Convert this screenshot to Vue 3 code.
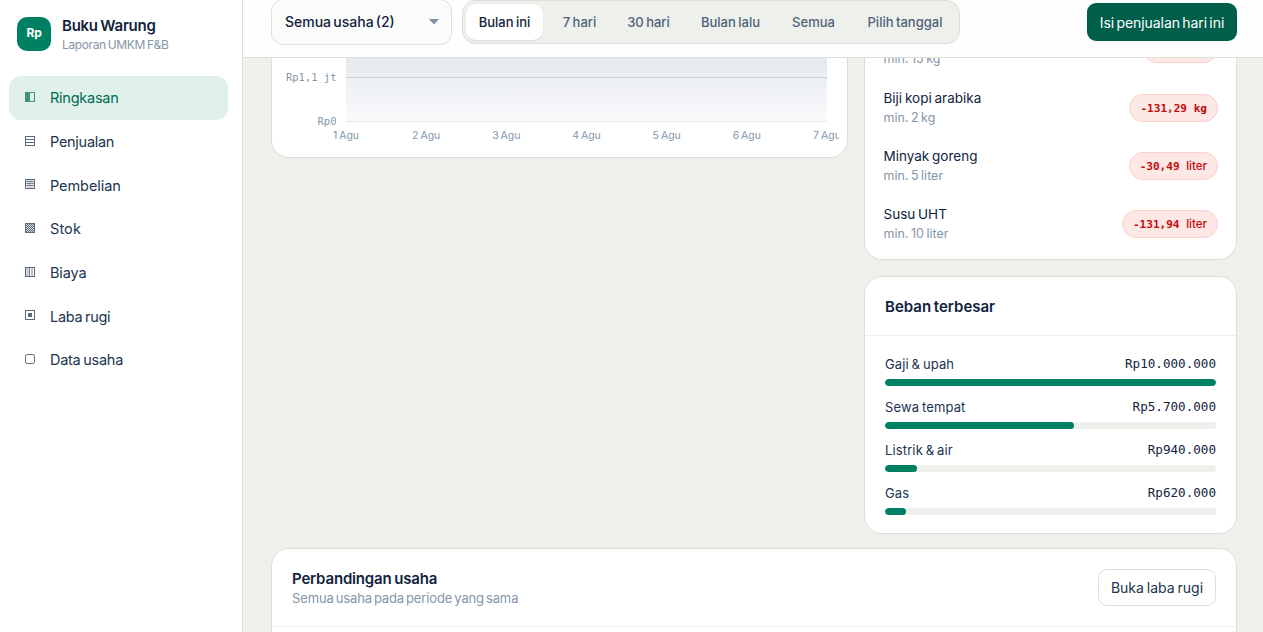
<script setup>
const nav = [
  { label: 'Ringkasan', icon: 'half', ls: -0.25 },
  { label: 'Penjualan', icon: 'rows', ls: -0.28 },
  { label: 'Pembelian', icon: 'grid', ls: -0.08 },
  { label: 'Stok', icon: 'check', ls: 0.1 },
  { label: 'Biaya', icon: 'cols', ls: -0.15 },
  { label: 'Laba rugi', icon: 'dot', ls: -0.3 },
  { label: 'Data usaha', icon: 'round', ls: -0.27 },
]
const dots = []
for (let r = 0; r < 8; r++) {
  for (let c = 0; c < 8; c++) {
    if ((r + c) % 2 === 0) dots.push({ x: 1 + c, y: 1 + r })
  }
}
const periods = [
  { label: 'Bulan ini', w: 77 },
  { label: '7 hari', w: 67 },
  { label: '30 hari', w: 71 },
  { label: 'Bulan lalu', w: 93 },
  { label: 'Semua', w: 73 },
  { label: 'Pilih tanggal', w: 110 },
]
const days = [1, 2, 3, 4, 5, 6, 7]
const stock = [
  { name: 'Gula pasir', min: 'min. 15 kg', qty: '-8,25', unit: 'kg' },
  { name: 'Biji kopi arabika', min: 'min. 2 kg', qty: '-131,29', unit: 'kg' },
  { name: 'Minyak goreng', min: 'min. 5 liter', qty: '-30,49', unit: 'liter' },
  { name: 'Susu UHT', min: 'min. 10 liter', qty: '-131,94', unit: 'liter' },
]
const costs = [
  { name: 'Gaji & upah', value: 'Rp10.000.000', pct: 100 },
  { name: 'Sewa tempat', value: 'Rp5.700.000', pct: 57 },
  { name: 'Listrik & air', value: 'Rp940.000', pct: 9.6 },
  { name: 'Gas', value: 'Rp620.000', pct: 6.3 },
]
</script>

<template>
  <div class="app">
    <aside class="sidebar">
      <div class="brand">
        <div class="logo">Rp</div>
        <div>
          <div class="brand-name">Buku Warung</div>
          <div class="brand-sub">Laporan UMKM F&amp;B</div>
        </div>
      </div>
      <nav>
        <a v-for="(n, i) in nav" :key="n.label" class="nav-item" :class="{ active: i === 0 }">
          <svg class="nav-icon" width="10" height="10" viewBox="0 0 10 10" fill="none" stroke="currentColor">
            <rect v-if="n.icon !== 'check'" x=".5" y=".5" width="9" height="9" :rx="n.icon === 'round' ? 1.8 : 0" />
            <rect v-if="n.icon === 'half'" x="0" y="0" width="5" height="10" fill="currentColor" stroke="none" />
            <path v-if="n.icon === 'rows'" d="M0 3.5h10M0 6.5h10" />
            <g v-if="n.icon === 'grid'">
              <path d="M0 2.5h10M0 4.5h10M0 6.5h10" stroke-width=".8" opacity=".9" />
              <path d="M3 0v10M5 0v10M7 0v10" stroke-width=".8" opacity=".7" />
            </g>
            <g v-if="n.icon === 'check'">
              <rect x="0" y="0" width="10" height="10" fill="currentColor" stroke="none" />
              <rect v-for="d in dots" :key="d.x + '-' + d.y" :x="d.x" :y="d.y" width="1" height="1" fill="#fff" fill-opacity=".75" stroke="none" />
            </g>
            <g v-if="n.icon === 'cols'">
              <rect x="1" y="1" width="3" height="8" fill="currentColor" fill-opacity=".3" stroke="none" />
              <path d="M4.5 0v10M7 0v10" stroke-width=".8" />
            </g>
            <rect v-if="n.icon === 'dot'" x="3" y="3" width="4" height="4" fill="currentColor" stroke="none" />
          </svg>
          <span :style="{ letterSpacing: n.ls + 'px' }">{{ n.label }}</span>
        </a>
      </nav>
    </aside>

    <main class="main">
      <header class="topbar">
        <div class="select">
          <span>Semua usaha (2)</span>
          <svg width="10" height="6" viewBox="0 0 10 6"><path d="M0 0h10L5 5.4z" fill="#7b91a8" /></svg>
        </div>
        <div class="segmented">
          <div v-for="(p, i) in periods" :key="p.label" class="seg" :class="{ on: i === 0 }" :style="{ width: p.w + 'px' }">{{ p.label }}</div>
        </div>
        <button class="primary">Isi penjualan hari ini</button>
      </header>

      <div class="viewport">
        <div class="content">
          <div class="columns">
            <section class="card chart">
              <svg width="554" height="130" viewBox="0 0 554 130">
                <defs>
                  <linearGradient id="area" x1="0" y1="0" x2="0" y2="1">
                    <stop offset="0" stop-color="#dde4ea" />
                    <stop offset=".37" stop-color="#e4e9ee" />
                    <stop offset="1" stop-color="#fbfbfd" />
                  </linearGradient>
                </defs>
                <rect x="61" y="0" width="481" height="101" fill="url(#area)" />
                <path d="M61 57.5h481" stroke="#c9d1d6" />
                <path d="M61 101.5h481" stroke="#e7e9e6" />
                <text class="axis-y" x="51.5" y="61" text-anchor="end">Rp1,1 jt</text>
                <text class="axis-y" x="51.5" y="105" text-anchor="end">Rp0</text>
                <text v-for="d in days" :key="d" class="axis-x" :x="61 + (d - 1) * 80.17" y="119" text-anchor="middle">{{ d }} Agu</text>
              </svg>
            </section>

            <div class="side">
              <section class="card stock">
                <div v-for="s in stock" :key="s.name" class="stock-row">
                  <div>
                    <div class="stock-name">{{ s.name }}</div>
                    <div class="stock-min">{{ s.min }}</div>
                  </div>
                  <div class="pill"><span class="qty">{{ s.qty }}&nbsp;</span><span :class="s.unit === 'kg' ? 'qty' : 'unit'">{{ s.unit }}</span></div>
                </div>
              </section>

              <section class="card costs">
                <h2 class="costs-head">Beban terbesar</h2>
                <div class="cost-list">
                  <div v-for="c in costs" :key="c.name">
                    <div class="cost-line"><span>{{ c.name }}</span><span class="money">{{ c.value }}</span></div>
                    <div class="track"><div class="fill" :style="{ width: c.pct + '%' }"></div></div>
                  </div>
                </div>
              </section>
            </div>
          </div>

          <section class="card compare">
            <div class="compare-head">
              <div>
                <h2>Perbandingan usaha</h2>
                <p>Semua usaha pada periode yang sama</p>
              </div>
              <button class="ghost">Buka laba rugi</button>
            </div>
          </section>
        </div>
      </div>
    </main>
  </div>
</template>

<style>
html, body { margin: 0; overflow: hidden; }
</style>

<style scoped>
* { box-sizing: border-box; }
.app { display: flex; width: 1263px; height: 632px; overflow: hidden; background: #eef0eb; color: #10233d; font-family: Inter, "Liberation Sans", sans-serif; white-space: nowrap; }
h2, p { margin: 0; }
button { font-family: inherit; padding: 0; }
.sidebar { width: 243px; flex: none; background: #fff; border-right: 1px solid #dde0da; padding: 17px 14px 0 9px; }
.brand { display: flex; gap: 11px; padding-left: 8px; height: 59px; }
.logo { width: 34px; height: 34px; border-radius: 10px; background: #008063; color: #fff; font-size: 12px; font-weight: 700; line-height: 32px; text-align: center; letter-spacing: -.2px; }
.brand-name { font-size: 15px; font-weight: 600; line-height: 18px; letter-spacing: -.25px; word-spacing: -1px; }
.brand-sub { font-size: 12px; line-height: 18px; color: #8496a9; letter-spacing: -.38px; word-spacing: -1px; margin-top: 1px; }
.nav-item { display: flex; align-items: center; gap: 15px; height: 43.67px; padding-left: 16px; border-radius: 12px; font-size: 14.5px; color: #20344f; word-spacing: -1px; }
.nav-icon { color: #5c6a7c; margin-top: -1.3px; }
.active { background: #e0f0ea; color: #006b53; }
.active .nav-icon { color: #3f927c; }
.main { flex: 1; display: flex; flex-direction: column; min-width: 0; }
.topbar { height: 58px; flex: none; background: #fefefe; border-bottom: 1px solid #dde0da; display: flex; align-items: flex-start; padding: 0 26px 0 28px; }
.select { width: 181px; height: 46px; margin-top: -1px; border: 1px solid #dde0da; border-radius: 12px; background: #fbfbfa; display: flex; align-items: center; justify-content: space-between; padding: 0 12px 2px 13px; font-size: 14px; font-weight: 500; word-spacing: -1.5px; }
.select svg { margin-top: 2px; }
.segmented { margin-left: 10px; width: 498px; height: 44px; border: 1px solid #dde0da; border-radius: 13px; background: #eef0eb; display: flex; padding: 3px; }
.seg { flex: none; height: 36px; line-height: 36px; text-align: center; font-size: 13px; font-weight: 500; color: #4f627b; border-radius: 10px; word-spacing: -1px; }
.seg.on { margin-right: 3px; background: #fff; color: #10233d; box-shadow: 0 1px 2px rgba(16, 35, 61, .08); }
.primary { margin: 3px 0 0 auto; width: 150px; height: 38px; border: 0; border-radius: 9px; background: #005f4b; color: #fff; font-size: 14px; word-spacing: -1.5px; letter-spacing: -.07px; }
.viewport { flex: 1; min-height: 0; overflow: hidden; }
.content { margin-top: -38px; padding: 0 26px 0 28px; }
.columns { display: grid; grid-template-columns: 577px 373px; gap: 16px; align-items: start; }
.card { background: #fff; border: 1px solid #dde0da; border-radius: 18px; }
.chart { height: 138px; border-top: 0; border-radius: 0 0 18px 18px; padding-left: 13px; }
.chart svg { display: block; }
.axis-y { font: 10.5px "DejaVu Sans Mono", monospace; fill: #8496a9; }
.axis-x { font-size: 10.5px; fill: #8496a9; word-spacing: -1px; }
.stock { height: 240px; border-top: 0; border-radius: 0 0 18px 18px; padding: 0 18px; }
.stock-row { height: 58.35px; display: flex; align-items: center; justify-content: space-between; }
.stock-name { font-size: 13.5px; line-height: 20px; word-spacing: -1px; padding-left: .5px; }
.stock-min { font-size: 12.5px; line-height: 20px; color: #8496a9; word-spacing: -1px; padding-left: .5px; }
.stock-row > div:first-child { padding-top: .3px; }
.pill { height: 28px; line-height: 26px; border: 1px solid #fbcfcb; border-radius: 14px; background: #fee8e6; color: #c40a0a; padding: 0 10px; font-size: 11.5px; font-weight: 600; }
.qty { font-family: "DejaVu Sans Mono", monospace; font-size: 11.05px; font-weight: 700; }
.unit { font-weight: 500; }
.costs { margin-top: 16px; height: 258px; }
h2 { font-size: 15px; font-weight: 600; letter-spacing: -.17px; word-spacing: -1px; }
.costs-head { height: 59px; line-height: 59px; padding-left: 20px; border-bottom: 1px solid #eef0eb; letter-spacing: 0; }
.cost-list { padding: 18px 20px 0; display: flex; flex-direction: column; gap: 11px; }
.cost-line { display: flex; justify-content: space-between; height: 22px; line-height: 21px; font-size: 13px; color: #20344f; letter-spacing: .13px; word-spacing: -1px; margin-bottom: 3px; }
.money { font-family: "DejaVu Sans Mono", monospace; font-size: 12.6px; letter-spacing: 0; line-height: 20px; color: #10233d; }
.track { height: 7px; border-radius: 4px; background: #eef0eb; overflow: hidden; }
.fill { height: 7px; border-radius: 4px; background: #008063; }
.compare { margin-top: 14px; height: 180px; }
.compare-head { height: 78px; border-bottom: 1px solid #eef0eb; display: flex; justify-content: space-between; padding: 20px 20px 0; }
.compare-head h2 { line-height: 19px; }
.compare-head p { font-size: 13px; line-height: 20px; color: #8496a9; letter-spacing: -.13px; word-spacing: -1.5px; }
.ghost { width: 118px; height: 37px; border: 1px solid #dde0da; border-radius: 9px; background: #fff; color: #20344f; font-size: 14px; word-spacing: -1px; }
</style>
